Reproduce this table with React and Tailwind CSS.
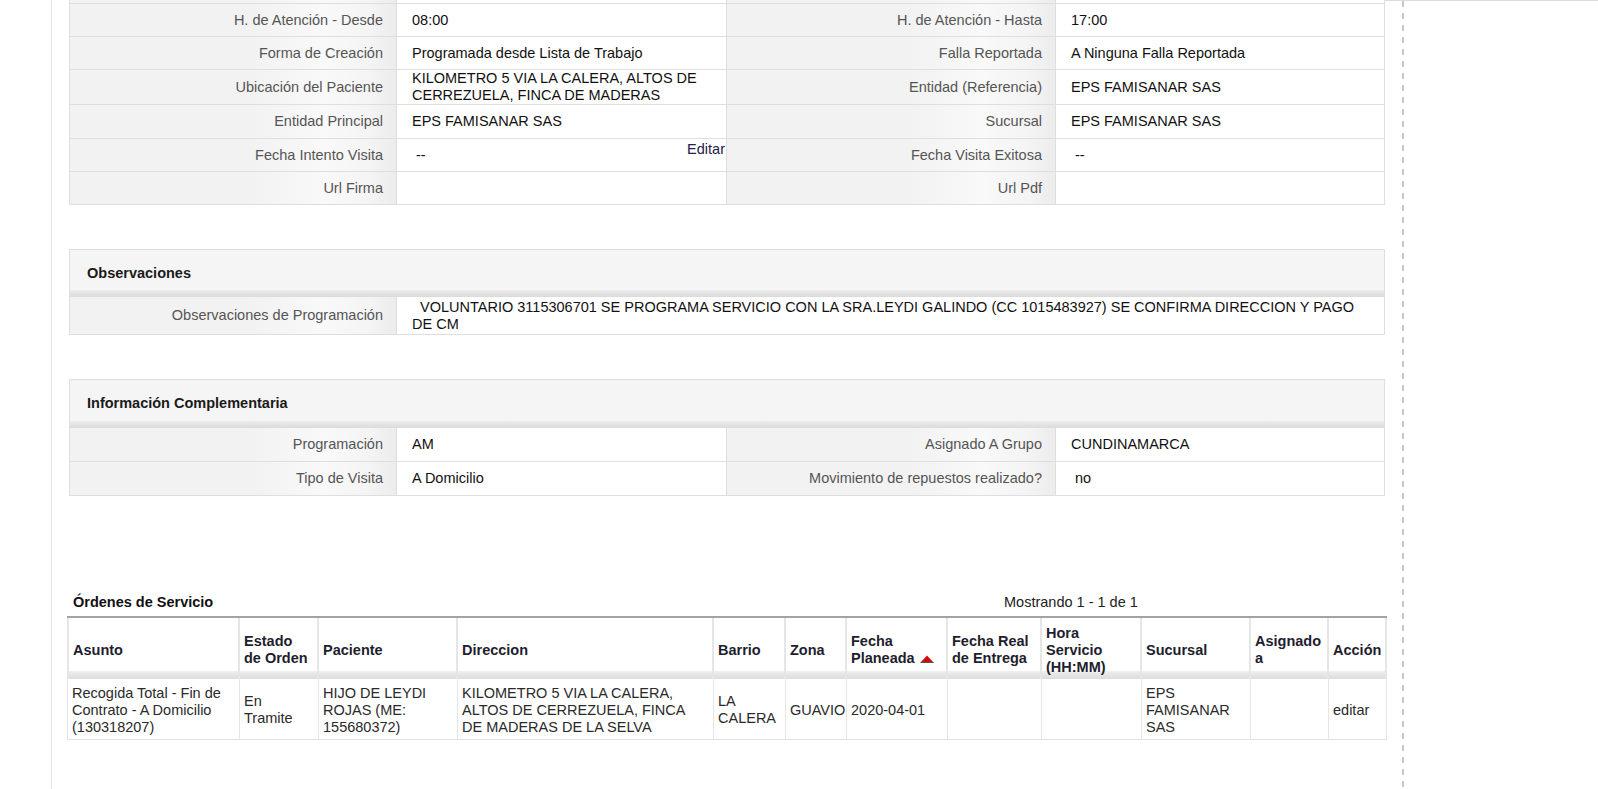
import React from "react";

const labelBg =
  "bg-[linear-gradient(90deg,#f2f2f2_0%,#f2f2f2_55%,#f9f9f9_78%,#f4f4f4_92%,#ececec_100%)]";

function Label({ children, w = "w-[327px]" }) {
  return (
    <div
      className={`${w} shrink-0 ${labelBg} border-r border-[#dedede] flex items-center justify-end pr-[13px] text-[#555] leading-[17px]`}
    >
      {children}
    </div>
  );
}

function Value({ children, w = "w-[330px]", last = false }) {
  return (
    <div
      className={`${last ? "flex-1" : `${w} shrink-0 border-r border-[#dedede]`} bg-white flex items-center pl-[15px] text-[#111] leading-[17px]`}
    >
      {children}
    </div>
  );
}

function Row({ h, l1, v1, l2, v2 }) {
  return (
    <div className={`flex ${h} border-b border-[#dedede]`}>
      <Label>{l1}</Label>
      <Value>{v1}</Value>
      <Label w="w-[329px]">{l2}</Label>
      <Value last>{v2}</Value>
    </div>
  );
}

function SectionHeader({ children, h = "h-[47px]" }) {
  return (
    <div className={`${h} flex flex-col bg-[#f5f5f5]`}>
      <div className="flex-1 flex items-center pl-[17px] pt-[7px] font-bold text-[#1a1a1a]">
        {children}
      </div>
      <div className="h-[7px] bg-[linear-gradient(#ededed,#dadada)]" />
    </div>
  );
}

const cols =
  "grid grid-cols-[173px_79px_139px_256px_72px_61px_101px_94px_100px_109px_78px_58px]";

function Th({ children, first }) {
  return (
    <div
      className={`relative h-[61px] flex items-center px-[4px] pt-[3px] font-bold text-[#1e1e2e] leading-[17px] border-r-2 border-[#e6e6e6] ${first ? "border-l-2" : ""} bg-[linear-gradient(to_bottom,#ffffff_0,#ffffff_53px,#efefef_53px,#dcdcdc_61px)]`}
    >
      <div>{children}</div>
    </div>
  );
}

function Td({ children, first }) {
  return (
    <div
      className={`h-[60px] flex items-center px-[4px] pt-[2px] text-[#2a2a2a] leading-[17px] border-r border-[#e6e6e6] ${first ? "border-l" : ""}`}
    >
      <div>{children}</div>
    </div>
  );
}

export default function App() {
  return (
    <div className="w-[1598px] h-[789px] overflow-hidden bg-white flex font-['Liberation_Sans',Arial,sans-serif] text-[14.5px]">
      {/* left gutter */}
      <div className="w-[52px] shrink-0 border-r border-[#e6e6e6]" />

      {/* main */}
      <div className="w-[1333px] shrink-0 pl-[17px]">
        <div className="w-[1316px]">
          {/* main details table (continuing from above) */}
          <div className="border-x border-[#dedede]">
            <div className="flex h-[4px] border-b border-[#dedede]">
              <div className={`w-[327px] ${labelBg} border-r border-[#dedede]`} />
              <div className="w-[330px] border-r border-[#dedede]" />
              <div className={`w-[329px] ${labelBg} border-r border-[#dedede]`} />
              <div className="flex-1" />
            </div>
            <Row
              h="h-[33px]"
              l1="H. de Atención - Desde"
              v1="08:00"
              l2="H. de Atención - Hasta"
              v2="17:00"
            />
            <Row
              h="h-[33px]"
              l1="Forma de Creación"
              v1="Programada desde Lista de Trabajo"
              l2="Falla Reportada"
              v2="A Ninguna Falla Reportada"
            />
            <Row
              h="h-[35px]"
              l1="Ubicación del Paciente"
              v1={
                <span>
                  KILOMETRO 5 VIA LA CALERA, ALTOS DE
                  <br />
                  CERREZUELA, FINCA DE MADERAS
                </span>
              }
              l2="Entidad (Referencia)"
              v2="EPS FAMISANAR SAS"
            />
            <Row
              h="h-[34px]"
              l1="Entidad Principal"
              v1="EPS FAMISANAR SAS"
              l2="Sucursal"
              v2="EPS FAMISANAR SAS"
            />
            <div className="flex h-[33px] border-b border-[#dedede]">
              <Label>Fecha Intento Visita</Label>
              <div className="w-[330px] shrink-0 border-r border-[#dedede] flex pl-[15px] pr-[1px] leading-[17px]">
                <span className="self-center pl-[4px] text-[#111]">--</span>
                <a className="ml-auto self-start pt-[2px] text-[#22224a]">Editar</a>
              </div>
              <Label w="w-[329px]">Fecha Visita Exitosa</Label>
              <Value last>
                <span className="pl-[4px]">--</span>
              </Value>
            </div>
            <Row h="h-[33px]" l1="Url Firma" v1="" l2="Url Pdf" v2="" />
          </div>

          {/* Observaciones */}
          <div className="mt-[44px] border border-[#dedede]">
            <SectionHeader>Observaciones</SectionHeader>
            <div className="flex h-[37px]">
              <Label>Observaciones de Programación</Label>
              <div className="flex-1 flex items-center pl-[15px] text-[#111] leading-[17px]">
                <span>
                  {"\u00a0\u00a0"}VOLUNTARIO 3115306701 SE PROGRAMA SERVICIO CON LA SRA.LEYDI GALINDO (CC 1015483927) SE CONFIRMA DIRECCION Y PAGO
                  <br />
                  DE CM
                </span>
              </div>
            </div>
          </div>

          {/* Información Complementaria */}
          <div className="mt-[44px] border border-[#dedede]">
            <SectionHeader h="h-[48px]">Información Complementaria</SectionHeader>
            <Row
              h="h-[34px]"
              l1="Programación"
              v1="AM"
              l2="Asignado A Grupo"
              v2="CUNDINAMARCA"
            />
            <div className="flex h-[33px]">
              <Label>Tipo de Visita</Label>
              <Value>A Domicilio</Value>
              <Label w="w-[329px]">Movimiento de repuestos realizado?</Label>
              <Value last>
                <span className="pl-[4px]">no</span>
              </Value>
            </div>
          </div>

          {/* Órdenes de Servicio */}
          <div className="ml-[-2px] w-[1320px] mt-[96px]">
            <div className="h-[22px] flex items-center">
              <div className="w-[937px] pl-[6px] font-bold text-[#111]">Órdenes de Servicio</div>
              <div className="text-[#222]">Mostrando 1 - 1 de 1</div>
            </div>
            <div className="mt-[2px] border-t-2 border-[#a3a3a3]">
              <div className={cols}>
                <Th first>Asunto</Th>
                <Th>
                  Estado
                  <br />
                  de Orden
                </Th>
                <Th>Paciente</Th>
                <Th>Direccion</Th>
                <Th>Barrio</Th>
                <Th>Zona</Th>
                <Th>
                  Fecha
                  <br />
                  <span className="inline-flex items-center gap-[5px]">
                    Planeada
                    <svg width="14" height="8" viewBox="0 0 14 8">
                      <polygon points="7,0.5 13.5,7.5 0.5,7.5" fill="#d10a0a" />
                      <line x1="0.5" y1="7.5" x2="13.5" y2="7.5" stroke="#555" strokeWidth="1" />
                    </svg>
                  </span>
                </Th>
                <Th>
                  Fecha Real
                  <br />
                  de Entrega
                </Th>
                <Th>
                  Hora
                  <br />
                  Servicio
                  <br />
                  (HH:MM)
                </Th>
                <Th>Sucursal</Th>
                <Th>
                  Asignado
                  <br />a
                </Th>
                <Th>Acción</Th>
              </div>
              <div className={`${cols} border-b border-[#e2e2e2]`}>
                <Td first>
                  Recogida Total - Fin de
                  <br />
                  Contrato - A Domicilio
                  <br />
                  (130318207)
                </Td>
                <Td>
                  En
                  <br />
                  Tramite
                </Td>
                <Td>
                  HIJO DE LEYDI
                  <br />
                  ROJAS (ME:
                  <br />
                  155680372)
                </Td>
                <Td>
                  KILOMETRO 5 VIA LA CALERA,
                  <br />
                  ALTOS DE CERREZUELA, FINCA
                  <br />
                  DE MADERAS DE LA SELVA
                </Td>
                <Td>
                  LA
                  <br />
                  CALERA
                </Td>
                <Td>GUAVIO</Td>
                <Td>2020-04-01</Td>
                <Td />
                <Td />
                <Td>
                  EPS
                  <br />
                  FAMISANAR
                  <br />
                  SAS
                </Td>
                <Td />
                <Td>editar</Td>
              </div>
            </div>
          </div>
        </div>
      </div>

      {/* right area */}
      <div className="flex-1 border-t border-[#dcdcdc] pl-[17px]">
        <div className="w-[2px] h-full bg-[repeating-linear-gradient(to_bottom,#c8c8c8_0px,#c8c8c8_6px,transparent_6px,transparent_12px)]" />
      </div>
    </div>
  );
}
